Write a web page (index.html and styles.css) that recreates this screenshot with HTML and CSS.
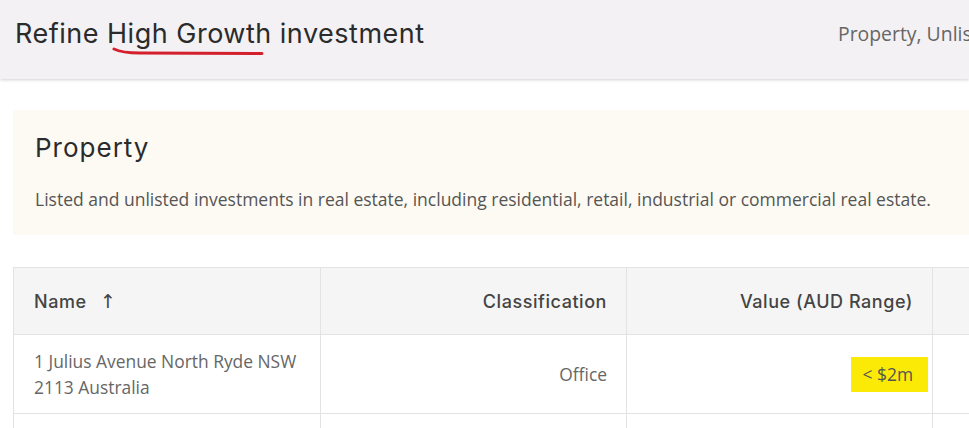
FILE: index.html
```html
<!DOCTYPE html>
<html>
<head>
<meta charset="utf-8">
<link rel="stylesheet" href="styles.css">
</head>
<body>
<header class="topbar">
  <h1 class="title">Refine <span class="marked">High Growth<svg class="underline" width="154" height="10" viewBox="0 0 154 10"><path d="M2 2 C 8 5, 14 6, 28 6 L 150 6.5" fill="none" stroke="#d3202c" stroke-width="3" stroke-linecap="round"/></svg></span> investment</h1>
  <div class="crumbs">Property, Unlisted Property, Office</div>
</header>
<main class="content">
  <section class="intro">
    <h2 class="intro-title">Property</h2>
    <p class="intro-text">Listed and unlisted investments in real estate, including residential, retail, industrial or commercial real estate.</p>
  </section>
  <table class="grid">
    <thead>
      <tr>
        <th class="col-name">Name <span class="sort">&#8593;</span></th>
        <th class="col-num">Classification</th>
        <th class="col-num">Value (AUD Range)</th>
        <th class="col-extra"></th>
      </tr>
    </thead>
    <tbody>
      <tr>
        <td class="col-name">1 Julius Avenue North Ryde NSW 2113 Australia</td>
        <td class="col-num">Office</td>
        <td class="col-num"><span class="hl">&lt; $2m</span></td>
        <td class="col-extra"></td>
      </tr>
      <tr class="next">
        <td class="col-name"></td>
        <td class="col-num"></td>
        <td class="col-num"></td>
        <td class="col-extra"></td>
      </tr>
    </tbody>
  </table>
</main>
</body>
</html>
```
FILE: styles.css
```css
html, body {
  margin: 0;
  padding: 0;
  background: #ffffff;
  overflow: hidden;
  width: 969px;
  height: 428px;
}
.topbar {
  height: 79px;
  box-sizing: border-box;
  background: #f3f1f3;
  box-shadow: 0 1px 3px rgba(0,0,0,0.18);
  display: flex;
  align-items: center;
  padding: 0 0 12px 15px;
  position: relative;
  z-index: 2;
  white-space: nowrap;
  overflow: hidden;
}
.title {
  margin: 0;
  flex: 0 0 823px;
  font-family: Inter, "Noto Sans", sans-serif;
  font-weight: 400;
  font-size: 27px;
  letter-spacing: 0.5px;
  color: #2b2b2b;
}
.marked {
  position: relative;
}
.underline {
  position: absolute;
  left: 5px;
  top: 30px;
}
.crumbs {
  font-family: "Open Sans", sans-serif;
  font-size: 19.4px;
  color: #666666;
  flex: 0 0 auto;
}
.content {
  width: 1400px;
  padding: 31px 0 0 13px;
}
.intro {
  background: #fdfaf3;
  height: 125px;
  padding: 22px 0 0 22px;
  box-sizing: border-box;
}
.intro-title {
  margin: 0;
  font-family: Inter, "Noto Sans", sans-serif;
  font-weight: 400;
  font-size: 26px;
  letter-spacing: 1px;
  color: #2b2b2b;
}
.intro-text {
  margin: 24px 0 0 0;
  font-family: "Open Sans", sans-serif;
  font-size: 17.5px;
  color: #555555;
}
.grid {
  margin-top: 32px;
  border-collapse: collapse;
  table-layout: fixed;
  width: 1100px;
}
.grid th, .grid td {
  border: 1px solid #e3e3e3;
}
.grid th {
  height: 66px;
  background: #f5f5f5;
  font-family: Inter, "Noto Sans", sans-serif;
  font-weight: 500;
  font-size: 18px;
  letter-spacing: 0.55px;
  color: #444444;
  padding: 0 19px 0 20px;
}
.grid td {
  height: 78px;
  font-family: "Open Sans", sans-serif;
  font-size: 17.4px;
  line-height: 26px;
  color: #666666;
  padding: 0 19px 0 20px;
}
.col-name {
  width: 267px;
  text-align: left;
  position: relative;
  box-shadow: 6px 0 8px -4px rgba(0,0,0,0.10);
}
.col-num {
  width: 266px;
  text-align: right;
}
.col-extra {
  width: 200px;
}
.sort {
  font-family: "DejaVu Sans", sans-serif;
  font-size: 19px;
  margin-left: 8px;
}
.hl {
  background: #fbea05;
  padding: 5px 15px 6px 12px;
  margin-right: -15px;
  color: #555555;
}
.next td {
  height: 40px;
}
```
